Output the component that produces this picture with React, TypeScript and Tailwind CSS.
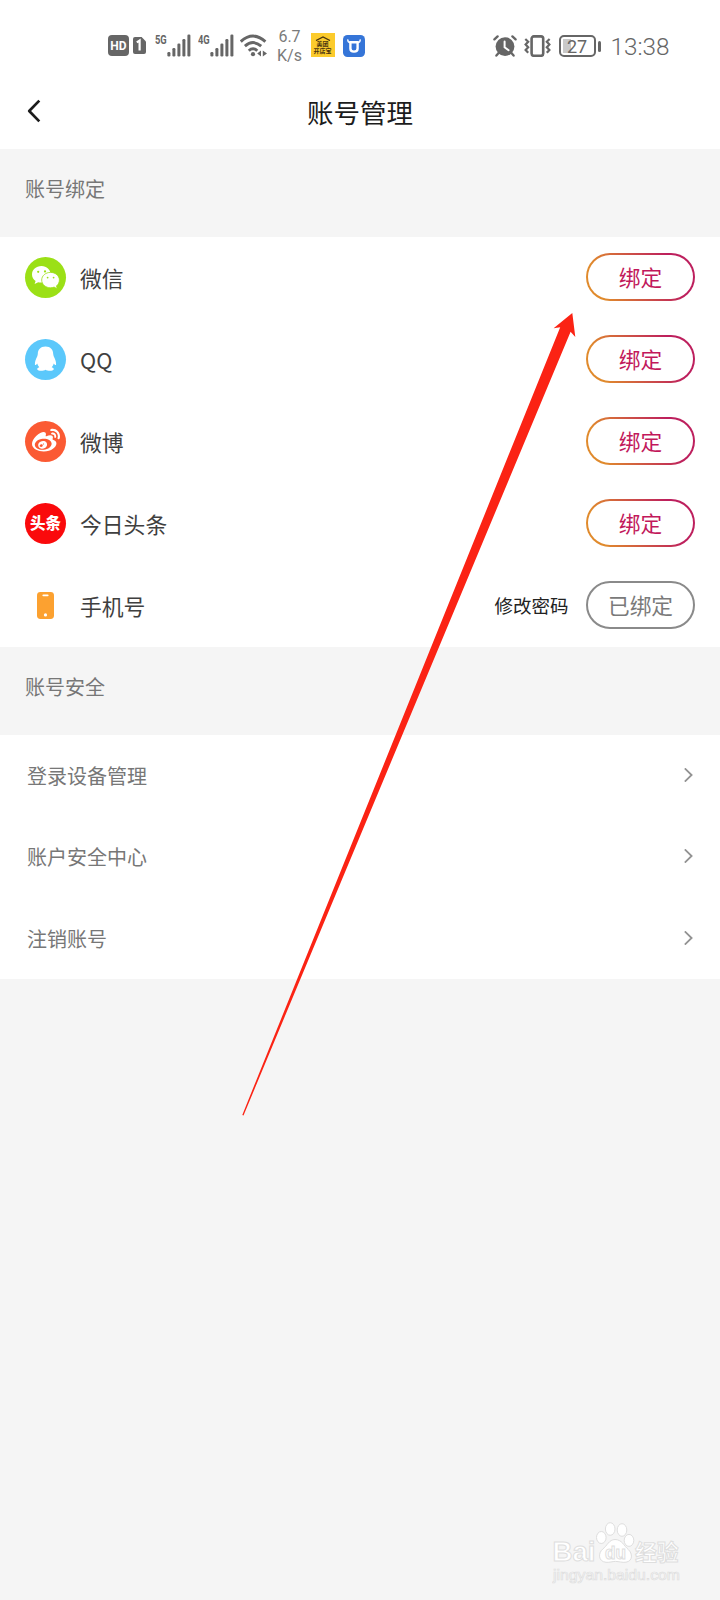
import { useState, type ReactNode } from "react"
import { FaWeibo } from "react-icons/fa"

const gray = "#666666"

function SignalBars() {
  return (
    <svg width="24" height="23" viewBox="0 0 24 23" fill={gray}>
      <rect x="0.4" y="18" width="3" height="4.4" rx="1.2" />
      <rect x="5.4" y="14" width="3" height="8.4" rx="1.2" />
      <rect x="10.4" y="9.6" width="3" height="12.8" rx="1.2" />
      <rect x="15.4" y="5" width="3" height="17.4" rx="1.2" />
      <rect x="20.4" y="0.6" width="3" height="21.8" rx="1.2" />
    </svg>
  )
}

function WifiIcon() {
  return (
    <svg width="28" height="24" viewBox="0 0 28 24" fill="none" stroke={gray} strokeWidth="2.9">
      <path d="M0.8 7.6 Q13 -3.4 25.4 7.6" />
      <path d="M4.9 12.2 Q13 5 21.2 12.2" />
      <path d="M8.8 16.7 Q13 12.8 17.3 16.7" />
      <circle cx="13" cy="20.2" r="2.1" fill={gray} stroke="none" />
      <path d="M21 16.4 V22.6 L17.2 19.6 Z M22.8 16.4 V22.6 L27 19.4 Z" fill={gray} stroke="none" />
    </svg>
  )
}

function AlarmIcon() {
  return (
    <svg width="24" height="22" viewBox="0 0 24 22" fill="none" stroke={gray} strokeLinecap="round">
      <circle cx="12" cy="11.6" r="9.4" fill={gray} stroke="none" />
      <path d="M1.4 4.4 L4.6 1.4 M22.6 4.4 L19.4 1.4" strokeWidth="2.3" />
      <path d="M5.8 17.8 L3.4 20.6 M18.2 17.8 L20.6 20.6" strokeWidth="2.3" />
      <path d="M11.6 6.4 V12.2 L15.6 15.2" stroke="#fff" strokeWidth="2" />
    </svg>
  )
}

function VibrateIcon() {
  return (
    <svg width="27" height="22" viewBox="0 0 27 22" fill="none" stroke={gray}>
      <rect x="7.6" y="1.4" width="11.6" height="19.4" rx="2.2" strokeWidth="2.6" />
      <path d="M1.3 4 L4.2 6.7 L1.6 9.4 L4.2 12.2 L1.6 15 L4.2 17.8" strokeWidth="2.2" />
      <path d="M25.6 4 L22.8 6.7 L25.4 9.4 L22.8 12.2 L25.4 15 L22.8 17.8" strokeWidth="2.2" />
    </svg>
  )
}

function StatusBar() {
  return (
    <div className="flex h-[76px] items-start pt-[33px] font-['Roboto',sans-serif] text-[#666666]">
      <div className="ml-[108px] mt-[2px] flex h-[21px] w-[21px] items-center justify-center rounded-[4px] bg-[#666666] text-[12px] font-bold text-white">
        HD
      </div>
      <svg className="ml-[3.5px] mt-[4px]" width="13" height="17" viewBox="0 0 13 17">
        <path d="M2 0 H8.6 L13 4.4 V15 Q13 17 11 17 H2 Q0 17 0 15 V2 Q0 0 2 0 Z" fill={gray} />
        <path d="M3.8 5.4 L6.6 3.6 V13.6" fill="none" stroke="#fff" strokeWidth="2.2" />
      </svg>
      <span className="ml-[9px] w-[12px] origin-left scale-x-[.72] text-[13px] font-bold leading-[13px]">5G</span>
      <span className="mt-[1px]"><SignalBars /></span>
      <span className="ml-[7px] w-[12px] origin-left scale-x-[.72] text-[13px] font-bold leading-[13px]">4G</span>
      <span className="mt-[1px]"><SignalBars /></span>
      <span className="ml-[6px] mt-[1px]"><WifiIcon /></span>
      <div className="-mt-[6px] ml-[9px] w-[26px] text-center text-[16px] leading-[19px] text-[#7a7a7a]">
        <p>6.7</p>
        <p>K/s</p>
      </div>
      <div className="ml-[8px] flex h-6 w-6 flex-col items-center bg-[#fccb2c] pt-[3px] font-['Noto_Sans_CJK_SC',sans-serif] text-[#4a3510]">
        <svg width="16" height="5" viewBox="0 0 16 5" fill="none" stroke="#4a3510" strokeWidth="1.2">
          <path d="M1 4.6 L8 1 L15 4.6" />
        </svg>
        <p className="text-[6px] font-bold leading-[6px]">美团</p>
        <p className="text-[6px] font-bold leading-[7px]">开店宝</p>
      </div>
      <svg className="ml-[8px] mt-[2px]" width="22" height="22" viewBox="0 0 22 22">
        <rect width="22" height="22" rx="4.5" fill="#3575d8" />
        <path d="M7.4 7.2 H14.6 V13.4 Q14.6 16.6 11 16.6 Q7.4 16.6 7.4 13.4 Z" fill="none" stroke="#fff" strokeWidth="2.4" />
        <path d="M4.8 4.4 Q4.6 7.6 7.4 7.8 M17.2 4.4 Q17.4 7.6 14.6 7.8" fill="none" stroke="#fff" strokeWidth="1.4" />
      </svg>
      <span className="ml-[128.5px] mt-[2px]"><AlarmIcon /></span>
      <span className="ml-[6.5px] mt-[2px]"><VibrateIcon /></span>
      <div className="ml-[8px] mt-[2px] flex items-center">
        <div className="h-[22px] w-[37px] rounded-[5px] border-2 border-[#666666] p-[2px]">
          <div className="flex h-full items-center justify-center bg-linear-to-r from-[#c9c9c9] from-27% to-white to-27% text-[18px]">
            27
          </div>
        </div>
        <div className="ml-[2.5px] h-[11px] w-[2.5px] rounded-full bg-[#666666]" />
      </div>
      <span className="ml-[10px] mt-px text-[24.3px] font-light leading-[26px]">13:38</span>
    </div>
  )
}

function Header() {
  return (
    <header className="flex h-[73px] items-center px-[27px] pb-[4px]">
      <svg width="14" height="24" viewBox="0 0 14 24" fill="none" stroke="#1c1c1c" strokeWidth="2.7">
        <path d="M12.3 1.6 L2.2 12 L12.3 22.4" strokeLinejoin="round" />
      </svg>
      <h1 className="flex-1 pr-[14px] pt-[3px] text-center text-[26.5px] leading-[40px] text-[#1c1c1c]">账号管理</h1>
    </header>
  )
}

function Badge({ className, children }: { className: string; children: ReactNode }) {
  return <div className={`flex h-[41px] w-[41px] items-center justify-center rounded-full ${className}`}>{children}</div>
}

function WechatGlyph() {
  return (
    <svg width="29" height="25" viewBox="0 0 29 25">
      <path d="M10.5 1 C5 1 1 4.7 1 9.4 C1 12.1 2.4 14.5 4.6 16 L3.6 19 L7.2 17.2 C12 18.6 19.6 16 19.6 9.4 C19.6 4.6 15.7 1 10.5 1 Z" fill="#fff" />
      <path d="M19.5 7.4 C14.6 7.4 10.7 10.8 10.7 15 C10.7 19.4 14.8 22.8 19.5 22.8 C20.8 22.8 22 22.5 23.1 22.1 L26.2 23.8 L25.5 20.9 C27.2 19.5 28.4 17.4 28.4 15 C28.4 10.8 24.4 7.4 19.5 7.4 Z" fill="#fff" stroke="#9be016" strokeWidth="0.8" />
      <g fill="#9be016">
        <circle cx="7.2" cy="6.8" r="1.1" />
        <circle cx="14" cy="6.4" r="1.1" />
        <circle cx="16.6" cy="12.6" r="0.9" />
        <circle cx="22.6" cy="12.6" r="0.9" />
      </g>
    </svg>
  )
}

function QQGlyph() {
  return (
    <svg width="23" height="26" viewBox="0 0 23 26" fill="#fff">
      <path d="M11.5 0.5 C6.4 0.5 3.8 3.8 3.8 8 C3.8 9 3.4 9.6 3.2 10.6 C1.8 13.2 0.8 16 0.9 18.2 C1 19.8 2 19 3.2 17.4 C3.6 18.9 4.3 20.2 5.3 21.2 C3.6 21.8 2.9 22.6 3.3 23.6 C4 25.2 9.6 25.2 11.5 23.7 C13.4 25.2 19 25.2 19.7 23.6 C20.1 22.6 19.4 21.8 17.7 21.2 C18.7 20.2 19.4 18.9 19.8 17.4 C21 19 22 19.8 22.1 18.2 C22.2 16 21.2 13.2 19.8 10.6 C19.6 9.6 19.2 9 19.2 8 C19.2 3.8 16.6 0.5 11.5 0.5 Z" />
    </svg>
  )
}

function PhoneGlyph() {
  return (
    <svg width="17" height="27" viewBox="0 0 17 27">
      <rect width="17" height="27" rx="3.4" fill="#fca130" />
      <rect x="5.4" y="2.4" width="6.2" height="1.8" rx="0.9" fill="#fff" />
      <circle cx="8.5" cy="22.9" r="1.6" fill="#fff" />
    </svg>
  )
}

const accounts = [
  { key: "wechat", name: "微信", icon: <Badge className="bg-[#9be016]"><WechatGlyph /></Badge> },
  { key: "qq", name: "QQ", icon: <Badge className="bg-[#5bc8fb]"><QQGlyph /></Badge> },
  { key: "weibo", name: "微博", icon: <Badge className="bg-[#fb5a33]"><FaWeibo size={28} color="#fff" /></Badge> },
  {
    key: "toutiao",
    name: "今日头条",
    icon: <Badge className="bg-[#fa0a0c] pb-[1px] text-[15.5px] font-black text-white">头条</Badge>,
  },
  { key: "phone", name: "手机号", icon: <Badge className=""><PhoneGlyph /></Badge> },
]

const securityItems = ["登录设备管理", "账户安全中心", "注销账号"]

function BindButton({ bound, onClick }: { bound: boolean; onClick: () => void }) {
  if (bound) {
    return (
      <button className="h-[48px] w-[109px] rounded-full border-2 border-[#8a8a8a] text-[21.7px] leading-[42px] text-[#7a7a7a]">
        已绑定
      </button>
    )
  }
  return (
    <button
      onClick={onClick}
      className="h-[48px] w-[109px] rounded-full bg-linear-[68deg] from-[#e08a2c] from-15% to-[#bd1f5d] to-78% p-[2px]"
    >
      <span className="block h-full rounded-full bg-white text-[21.7px] leading-[43px] text-[#c2185b]">绑定</span>
    </button>
  )
}

function SectionTitle({ children }: { children: ReactNode }) {
  return <div className="h-[88px] pl-[25px] pt-[25px] text-[20px] leading-[30px] text-[#777777]">{children}</div>
}

// red pointer laid over the list
function Pointer() {
  return (
    <svg className="pointer-events-none absolute left-0 top-0" width="720" height="1600" viewBox="0 0 720 1600">
      <path d="M572.3 313 L553.6 328.2 L560.2 327.2 L242.3 1115 L243.5 1115.4 L570.6 331.8 L575.3 337 Z" fill="#fb2314" />
    </svg>
  )
}

function Watermark() {
  return (
    <div className="absolute bottom-[16px] left-[552px] w-[140px]">
      <svg width="130" height="66" viewBox="0 0 130 66" fill="#fff" stroke="#dedede" strokeWidth="1">
        <text x="0.5" y="43" fontFamily="Liberation Sans, sans-serif" fontWeight="700" fontSize="27" textLength="43" lengthAdjust="spacingAndGlyphs">Bai</text>
        <ellipse cx="49.3" cy="19.5" rx="4.8" ry="6" />
        <ellipse cx="58.2" cy="11" rx="4.8" ry="6.3" />
        <ellipse cx="70" cy="12" rx="4.8" ry="6.3" />
        <ellipse cx="77" cy="22.4" rx="4.8" ry="6" />
        <path d="M63 21.5 C57 21.5 55 28 50.8 31 C46 35 46 43.5 54 44.3 C58 44.6 60 43.4 63.5 43.4 C67 43.4 70 44.8 74 44.2 C81 43 80.6 35.5 76.4 31.6 C72 28 70 21.5 63 21.5 Z" />
        <text x="53" y="41" fontFamily="Liberation Sans, sans-serif" fontWeight="700" fontSize="18" textLength="21" lengthAdjust="spacingAndGlyphs">du</text>
        <text x="83" y="42" fontFamily="Noto Sans CJK SC, sans-serif" fontWeight="700" fontSize="21.8">经验</text>
        <text x="1" y="62" fontFamily="Liberation Sans, sans-serif" fontSize="14" strokeWidth="0.7" textLength="127" lengthAdjust="spacingAndGlyphs">jingyan.baidu.com</text>
      </svg>
    </div>
  )
}

export default function App() {
  const [bound, setBound] = useState<string[]>(["phone"])

  return (
    <div className="relative h-[1600px] w-[720px] overflow-hidden bg-[#f5f5f5] font-['Noto_Sans_CJK_SC',sans-serif]">
      <div className="bg-white">
        <StatusBar />
        <Header />
      </div>

      <SectionTitle>账号绑定</SectionTitle>
      <div className="bg-white">
        {accounts.map(a => (
          <div key={a.key} className="flex h-[82px] items-center px-[25px] pb-[2px]">
            {a.icon}
            <span className="ml-[14px] flex-1 pt-[3px] text-[21.8px] text-[#3f3f3f]">{a.name}</span>
            {a.key === "phone" && <a className="mr-[17.5px] pt-[2px] text-[18.5px] text-[#222222]">修改密码</a>}
            <BindButton bound={bound.includes(a.key)} onClick={() => setBound(prev => [...prev, a.key])} />
          </div>
        ))}
      </div>

      <SectionTitle>账号安全</SectionTitle>
      <div className="bg-white">
        {securityItems.map(item => (
          <div key={item} className="flex h-[81.3px] items-center justify-between pl-[27px] pr-[27px]">
            <span className="pt-px text-[20px] text-[#777777]">{item}</span>
            <svg className="mb-[1px]" width="9" height="14" viewBox="0 0 9 14" fill="none" stroke="#929292" strokeWidth="1.8">
              <path d="M0.8 0.4 L7.6 7 L0.8 13.6" />
            </svg>
          </div>
        ))}
      </div>

      <Pointer />
      <Watermark />
    </div>
  )
}
